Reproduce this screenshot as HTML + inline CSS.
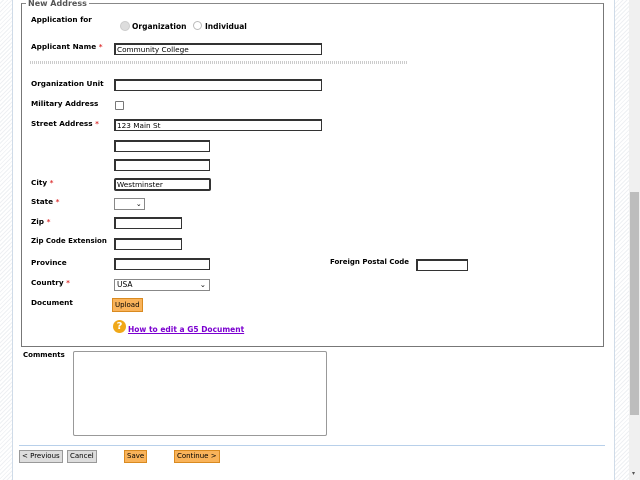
<!DOCTYPE html>
<html><head><style>
body{margin:0;width:640px;height:480px;overflow:hidden;font-family:Verdana,"DejaVu Sans",sans-serif;font-size:7.5px;color:#000;position:relative;background:repeating-linear-gradient(135deg,#fff 0 2px,#eef0f3 2px 3px)}
.main{position:absolute;left:12px;top:0;width:601px;height:480px;background:#fff;border-left:1px solid #cfdbe8;border-right:1px solid #cfdbe8}
.a{position:absolute}
.l{position:absolute;left:31px;font-weight:bold;font-size:7.3px}
.r{color:#d33}
.in{position:absolute;height:9px;border:1px solid #333;border-top-width:2px;border-left-width:2px;background:#fff;font-size:7.3px;line-height:9px;padding-left:1px}
.btn{position:absolute;height:11px;font-size:7px;line-height:11px;padding:0 2px;border:1px solid #999;background:#ddd}
.o{background:#f9b35a;border-color:#d98a20}
.scr{position:absolute;left:629px;top:0;width:11px;height:480px;background:#f0f0f0}
</style></head><body>
<div class="main"></div>
<div class="scr"><div class="a" style="left:1px;top:192px;width:9px;height:223px;background:#bdbdbd"></div><div class="a" style="left:3px;top:470px;font-size:6px;color:#555">▾</div></div>
<div class="a" style="left:21px;top:3px;width:581px;height:342px;border:1px solid #777;border-top:1px solid #888"></div>
<div class="a" style="left:26px;top:-1px;background:#fff;padding:0 2px;font-weight:bold;color:#555;font-size:8px;line-height:9px">New Address</div>
<div class="l" style="top:15px">Application for</div>
<div class="a" style="left:120px;top:21px;width:8px;height:8px;border-radius:50%;background:#ddd;border:1px solid #ccc"></div>
<div class="a" style="left:132px;top:22px;font-weight:bold">Organization</div>
<div class="a" style="left:193px;top:21px;width:7px;height:7px;border-radius:50%;border:1px solid #bbb"></div>
<div class="a" style="left:205px;top:22px;font-weight:bold">Individual</div>
<div class="l" style="top:42px">Applicant Name <span class="r">*</span></div>
<div class="in" style="left:114px;top:43px;width:204px">Community College</div>
<div class="a" style="left:30px;top:61px;width:378px;height:3px;background:repeating-linear-gradient(90deg,#ccc 0 1px,#fff 1px 2px)"></div>
<div class="l" style="top:79px">Organization Unit</div>
<div class="in" style="left:114px;top:79px;width:204px"></div>
<div class="l" style="top:99px">Military Address</div>
<div class="a" style="left:115px;top:101px;width:7px;height:7px;border:1px solid #777;border-radius:1px"></div>
<div class="l" style="top:119px">Street Address <span class="r">*</span></div>
<div class="in" style="left:114px;top:119px;width:204px">123 Main St</div>
<div class="in" style="left:114px;top:140px;width:92px"></div>
<div class="in" style="left:114px;top:159px;width:92px"></div>
<div class="l" style="top:178px">City <span class="r">*</span></div>
<div class="in" style="left:114px;top:178px;width:92px;border-radius:2px;border-width:2px">Westminster</div>
<div class="l" style="top:197px">State <span class="r">*</span></div>
<div class="a" style="left:114px;top:198px;width:29px;height:10px;border:1px solid #888;font-size:7px;text-align:right;line-height:10px">⌄&nbsp;</div>
<div class="l" style="top:217px">Zip <span class="r">*</span></div>
<div class="in" style="left:114px;top:217px;width:64px"></div>
<div class="l" style="top:237px;font-size:7px">Zip Code Extension</div>
<div class="in" style="left:114px;top:238px;width:64px"></div>
<div class="l" style="top:258px">Province</div>
<div class="in" style="left:114px;top:258px;width:92px"></div>
<div class="a" style="left:330px;top:258px;font-weight:bold;font-size:7px">Foreign Postal Code</div>
<div class="in" style="left:416px;top:259px;width:48px"></div>
<div class="l" style="top:278px">Country <span class="r">*</span></div>
<div class="a" style="left:114px;top:279px;width:92px;height:10px;border:1px solid #888;line-height:10px;padding-left:2px">USA<span style="position:absolute;right:3px">⌄</span></div>
<div class="l" style="top:298px">Document</div>
<div class="btn o" style="left:112px;top:298px;height:12px;line-height:12px">Upload</div>
<div class="a" style="left:113px;top:320px;width:13px;height:13px;border-radius:50%;background:#f0a818;color:#fff;font-weight:bold;font-size:10px;text-align:center;line-height:13px">?</div>
<div class="a" style="left:128px;top:325px;color:#7b00d0;text-decoration:underline;font-weight:bold">How to edit a G5 Document</div>
<div class="a" style="left:23px;top:351px;font-weight:bold;font-size:7px">Comments</div>
<div class="a" style="left:73px;top:351px;width:252px;height:83px;border:1px solid #999;border-radius:2px"></div>
<div class="a" style="left:19px;top:445px;width:586px;border-top:1px solid #b8d0ea"></div>
<div class="btn" style="left:19px;top:450px">&lt; Previous</div>
<div class="btn" style="left:67px;top:450px">Cancel</div>
<div class="btn o" style="left:124px;top:450px">Save</div>
<div class="btn o" style="left:174px;top:450px">Continue &gt;</div>
</body></html>
